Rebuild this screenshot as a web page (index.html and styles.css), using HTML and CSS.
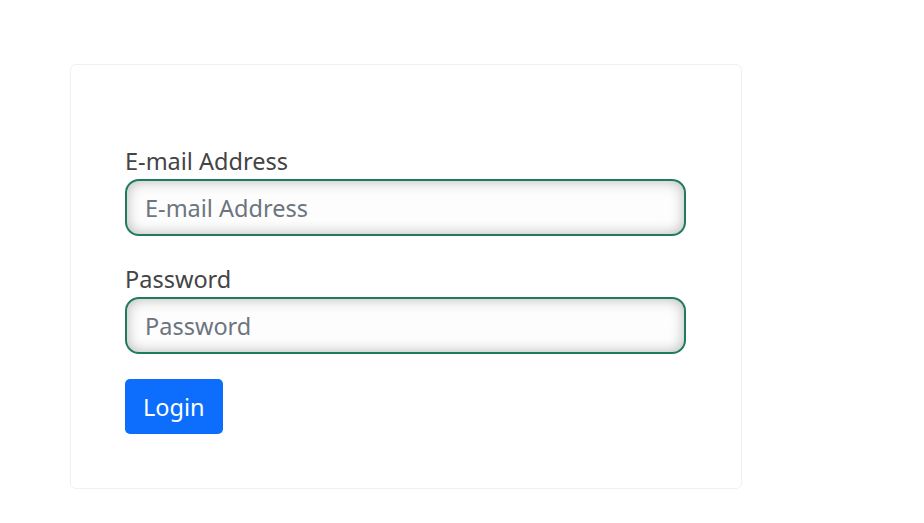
FILE: index.html
```html
<!DOCTYPE html>
<html>
    <head>
        <title>Login</title>
        <meta charset="utf-8">
        <link rel="stylesheet" href="styles.css">
    </head>
    <body>
        <main class="login-card">
            <form class="login-form">
                <div class="field">
                    <label for="email">E-mail Address</label>
                    <input id="email" type="email" placeholder="E-mail Address">
                </div>
                <div class="field">
                    <label for="password">Password</label>
                    <input id="password" type="password" placeholder="Password">
                </div>
                <button type="button" class="btn-login">Login</button>
            </form>
        </main>
    </body>
</html>
```
FILE: styles.css
```css
body{
    margin: 0;
    padding: 64px 0 0 70px;
    background-color: #fff;
    font-family: "Noto Sans", "Open Sans", sans-serif;
    color: #444;
}
.login-card{
    width: 672px;
    box-sizing: border-box;
    border: 1px solid #f0f0f0;
    border-radius: 6px;
    padding: 82px 55px 54px 54px;
}
.login-form{
    display: flex;
    flex-direction: column;
    margin: 0;
}
.field{
    display: flex;
    flex-direction: column;
    margin-bottom: 29px;
}
.field:nth-child(2){
    margin-bottom: 25px;
}
label{
    font-size: 23.5px;
    line-height: 29px;
    margin-bottom: 3px;
    color: #444;
}
input{
    box-sizing: border-box;
    height: 57px;
    border: 2px solid #1e7b5e;
    border-radius: 14px;
    padding: 0 18px;
    font-family: inherit;
    font-size: 23.5px;
    color: #555;
    background-color: #fdfdfd;
    box-shadow: inset 0 0 14px rgba(0,0,0,0.28);
    outline: none;
}
input::placeholder{
    color: #6c757d;
}
.btn-login{
    align-self: flex-start;
    height: 55px;
    padding: 0 18px;
    border: none;
    border-radius: 5px;
    background-color: #0d6efd;
    color: #fff;
    font-family: inherit;
    font-size: 23.5px;
}
```
